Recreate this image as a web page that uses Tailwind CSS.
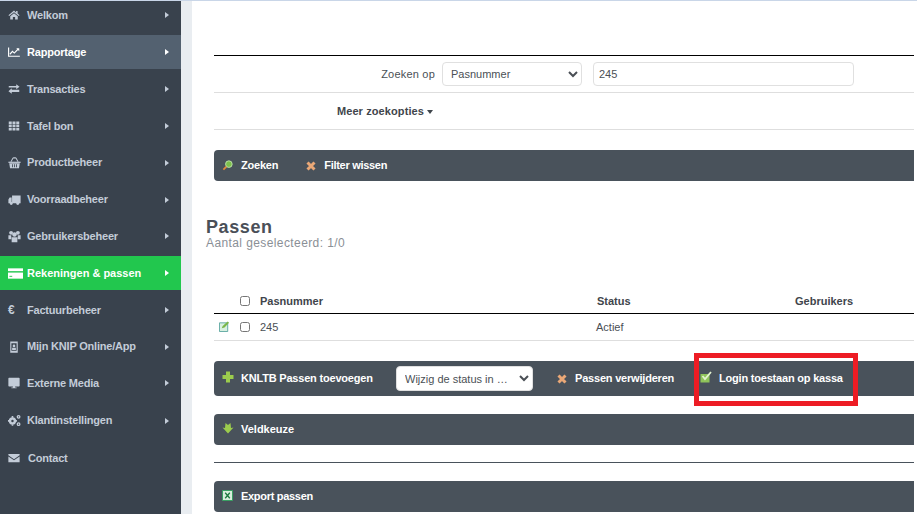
<!DOCTYPE html>
<html lang="en">
<head>
    <meta charset="UTF-8">
    <title>Passen</title>
    <script src="https://cdn.jsdelivr.net/npm/@tailwindcss/browser@4"></script>
</head>
<body class="relative h-[514px] overflow-hidden bg-white font-['Liberation_Sans',Arial,sans-serif] text-[11px] text-[#4a4f55]">
    <div class="h-px bg-[#c9d6e8]"></div>
    <div class="flex h-[513px]">
        <!-- Sidebar -->
        <aside class="w-[181px] shrink-0 overflow-hidden bg-[#39424d]">
            <nav class="-mt-[2.7px] font-bold tracking-[-0.2px] text-[#c3ccd8]">
                <a class="mb-[2.85px] flex h-[34px] items-center pl-2 pr-[12px]">
                    <svg class="mr-[7px] h-3 w-3 shrink-0" viewBox="0 0 16 16" fill="currentColor"><path d="M8 2 .6 8.2l1 1.2L8 4.2l6.4 5.2 1-1.2-2.6-2.1V2.5h-2v2.2z"/><path d="M3 9.6 8 5.5l5 4.1V14H9.5v-3.4h-3V14H3z"/></svg>
                    <span class="flex-1">Welkom</span>
                    <span class="h-0 w-0 border-y-[3px] border-l-[4px] border-y-transparent border-l-current"></span>
                </a>
                <a class="mb-[2.85px] flex h-[34px] items-center bg-[#536170] pl-2 pr-[12px] text-white">
                    <svg class="mr-[7px] h-3 w-3 shrink-0" viewBox="0 0 16 16" fill="none" stroke="currentColor" stroke-width="1.5"><path d="M.8 2v11.6h15"/><path d="M2.5 11 6 7.2 8.4 9.4 13.6 4"/><path d="M11 3h4v4z" fill="currentColor" stroke="none"/></svg>
                    <span class="flex-1">Rapportage</span>
                    <span class="h-0 w-0 border-y-[3px] border-l-[4px] border-y-transparent border-l-current"></span>
                </a>
                <a class="mb-[2.85px] flex h-[34px] items-center pl-2 pr-[12px]">
                    <svg class="mr-[7px] h-3 w-3 shrink-0" viewBox="0 0 16 16" fill="currentColor"><path d="M1 4h10V1.6L15.4 5 11 8.4V6H1zM15 9H5V6.9L.6 11 5 14.4V12h10z"/></svg>
                    <span class="flex-1">Transacties</span>
                    <span class="h-0 w-0 border-y-[3px] border-l-[4px] border-y-transparent border-l-current"></span>
                </a>
                <a class="mb-[2.85px] flex h-[34px] items-center pl-2 pr-[12px]">
                    <svg class="mr-[7px] h-3 w-3 shrink-0" viewBox="0 0 16 16" fill="currentColor"><path d="M1 2h4v3.5H1zM6 2h4v3.5H6zM11 2h4v3.5h-4zM1 6.3h4v3.4H1zM6 6.3h4v3.4H6zM11 6.3h4v3.4h-4zM1 10.500h4V14H1zM6 10.500h4V14H6zM11 10.500h4V14h-4z"/></svg>
                    <span class="flex-1">Tafel bon</span>
                    <span class="h-0 w-0 border-y-[3px] border-l-[4px] border-y-transparent border-l-current"></span>
                </a>
                <a class="mb-[2.85px] flex h-[34px] items-center pl-2 pr-[12px]">
                    <svg class="mr-[6px] h-[13px] w-[13px] shrink-0" viewBox="0 0 16 16" fill="currentColor"><path d="M.5 7h15v1.5H.5z"/><path fill-rule="evenodd" d="M1.5 9h13l-1 6h-11zM5 10.300v3.400h1v-3.400zM7.500 10.300v3.400h1v-3.400zM10 10.300v3.400h1v-3.400z"/><path d="M3 7 5.500 2.500Q6 1.500 7 1.500h2q1 0 1.500 1L13 7h-1.400L9.500 3h-3L4.400 7z"/></svg>
                    <span class="flex-1">Productbeheer</span>
                    <span class="h-0 w-0 border-y-[3px] border-l-[4px] border-y-transparent border-l-current"></span>
                </a>
                <a class="mb-[2.85px] flex h-[34px] items-center pl-2 pr-[12px]">
                    <svg class="mr-[6px] h-[13px] w-[13px] shrink-0" viewBox="0 0 16 16" fill="currentColor"><path d="M5 3h10.500v9.500H5zM4.500 5.500H2L.5 8v4.500h4z"/><circle cx="4" cy="13" r="1.800"/><circle cx="12" cy="13" r="1.800"/></svg>
                    <span class="flex-1">Voorraadbeheer</span>
                    <span class="h-0 w-0 border-y-[3px] border-l-[4px] border-y-transparent border-l-current"></span>
                </a>
                <a class="mb-[2.85px] flex h-[34px] items-center pl-2 pr-[12px]">
                    <svg class="mr-[6px] h-[13px] w-[13px] shrink-0" viewBox="0 0 16 16" fill="currentColor"><circle cx="3.800" cy="3.500" r="2.400"/><circle cx="12.200" cy="3.500" r="2.400"/><circle cx="8" cy="5.500" r="2.800"/><path d="M.5 6.500h3.500L4 11.500H.5zM12 6.500h3.500v5H12zM4.500 9h7v6h-7z"/></svg>
                    <span class="flex-1">Gebruikersbeheer</span>
                    <span class="h-0 w-0 border-y-[3px] border-l-[4px] border-y-transparent border-l-current"></span>
                </a>
                <a class="mb-[2.85px] flex h-[34px] items-center bg-[#22c74e] pl-2 pr-[12px] tracking-normal text-white">
                    <svg class="mr-[4px] h-[15px] w-[15px] shrink-0" viewBox="0 0 16 16"><path d="M0 2.500h16v3H0z" fill="#fff"/><path d="M0 7h16v6.500H0z" fill="#fff"/><path d="M1.500 10.500h3v1h-3z" fill="#22c74e"/></svg>
                    <span class="flex-1">Rekeningen &amp; passen</span>
                    <span class="h-0 w-0 border-y-[3px] border-l-[4px] border-y-transparent border-l-current"></span>
                </a>
                <a class="mb-[2.5px] flex h-[34px] items-center pl-2 pr-[12px]">
                    <span class="w-[19px] shrink-0 text-[12px]">€</span>
                    <span class="flex-1">Factuurbeheer</span>
                    <span class="h-0 w-0 border-y-[3px] border-l-[4px] border-y-transparent border-l-current"></span>
                </a>
                <a class="mb-[2.85px] flex h-[34px] items-center pl-2 pr-[12px]">
                    <svg class="mr-[7px] h-3 w-3 shrink-0" viewBox="0 0 16 16" fill="currentColor"><path fill-rule="evenodd" d="M3 .5h10v15H3zM4.500 3v10h7V3z"/><circle cx="8" cy="6.500" r="1.800"/><path d="M5.500 9h5v3h-5z"/></svg>
                    <span class="flex-1">Mijn KNIP Online/App</span>
                    <span class="h-0 w-0 border-y-[3px] border-l-[4px] border-y-transparent border-l-current"></span>
                </a>
                <a class="mb-[3.2px] flex h-[34px] items-center pl-2 pr-[12px]">
                    <svg class="mr-[7px] h-3 w-3 shrink-0" viewBox="0 0 16 16" fill="currentColor"><path fill-rule="evenodd" d="M1.500 1h13a1 1 0 0 1 1 1v9.500a1 1 0 0 1-1 1h-5V14h2v1h-7v-1h2v-1.500h-5a1 1 0 0 1-1-1V2a1 1 0 0 1 1-1z"/></svg>
                    <span class="flex-1">Externe Media</span>
                    <span class="h-0 w-0 border-y-[3px] border-l-[4px] border-y-transparent border-l-current"></span>
                </a>
                <a class="mb-[2.85px] flex h-[34px] items-center pl-2 pr-[12px]">
                    <svg class="mr-[6px] h-[13px] w-[13px] shrink-0" viewBox="0 0 16 16" fill="currentColor"><circle cx="5.500" cy="8.500" r="3" fill="none" stroke="currentColor" stroke-width="3"/><path d="M4.500 2.500h2v2h-2zM4.500 12.500h2v2h-2zM0 7.500h2v2H0zM9 7.500h2v2H9z"/><circle cx="13" cy="3.500" r="1.600" fill="none" stroke="currentColor" stroke-width="1.600"/><circle cx="13" cy="12.500" r="1.600" fill="none" stroke="currentColor" stroke-width="1.600"/></svg>
                    <span class="flex-1">Klantinstellingen</span>
                    <span class="h-0 w-0 border-y-[3px] border-l-[4px] border-y-transparent border-l-current"></span>
                </a>
                <a class="flex h-[34px] items-center pl-2 pr-[12px] pt-[1px]">
                    <svg class="mr-2 h-3 w-3 shrink-0" viewBox="0 0 16 16" fill="currentColor"><path d="M.5 2.500h15v1.800L8 9.500.5 4.300z"/><path d="M.5 6 8 11l7.500-5v7.500H.5z"/></svg>
                    <span class="flex-1">Contact</span>
                </a>
            </nav>
        </aside>
        <div class="w-[11px] shrink-0 bg-[#e9edf1]"></div>

        <!-- Main -->
        <main class="flex-1 overflow-hidden pl-[22px] pr-[3px]">
            <div class="mt-[54px] border-t border-black"></div>
            <div class="flex h-[37px] items-center border-b border-[#dedede]">
                <label class="w-[221px] text-right tracking-[0.2px]">Zoeken op</label>
                <select class="ml-[7px] h-[24px] w-[140px] rounded-[4px] border border-[#e0e0e0] bg-white pl-[4px] text-[11px]">
                    <option>Pasnummer</option>
                </select>
                <input value="245" class="ml-[11px] h-[24px] w-[261px] rounded-[4px] border border-[#e0e0e0] pl-[5px] text-[11px]">
            </div>
            <div class="flex h-[37px] items-center border-b border-[#dedede]">
                <div class="flex w-[219px] items-center justify-end font-bold tracking-[0.1px] text-[#3f454b]">
                    Meer zoekopties
                    <span class="ml-[3px] mt-[1px] h-0 w-0 border-x-[3.5px] border-t-[4px] border-x-transparent border-t-current"></span>
                </div>
            </div>

            <div class="mt-[20px] flex h-[31px] items-center rounded-l-[4px] bg-[#49525b] pl-[8px] font-bold tracking-[-0.2px] text-white">
                <svg class="mr-[8px] h-[11px] w-[11px]" viewBox="0 0 12 12"><circle cx="7.500" cy="4.500" r="3.600" fill="#7cc04b" stroke="#bfe3ae"/><path d="M4.800 7.200 1.500 10.500" stroke="#e08a3c" stroke-width="2"/></svg>
                <span>Zoeken</span>
                <svg class="ml-[28px] mr-[8px] h-[10px] w-[10px]" viewBox="0 0 10 10"><path d="M1.500 1.500l7 7M8.500 1.500l-7 7" stroke="#eaa877" stroke-width="3"/></svg>
                <span class="tracking-[-0.3px]">Filter wissen</span>
            </div>

            <h2 class="-ml-[8px] mt-[37px] h-[18px] text-[18px] font-bold leading-[18px] tracking-[0.6px] text-[#4a4f58]">Passen</h2>
            <p class="-ml-[8px] text-[12px] leading-[14px] tracking-[0.4px] text-[#8a8f96]">Aantal geselecteerd: 1/0</p>

            <div class="mt-[39px] grid h-[25px] grid-cols-[26px_20px_337px_198px_1fr] items-center border-b border-black font-bold text-[#3f454b]">
                <span></span>
                <input type="checkbox" class="h-[10px] w-[10px]">
                <span>Pasnummer</span>
                <span>Status</span>
                <span>Gebruikers</span>
            </div>
            <div class="grid h-[27px] grid-cols-[26px_20px_337px_198px_1fr] items-center border-b border-[#dedede]">
                <svg class="mb-[2px] ml-[5px] h-[11px] w-[11px]" viewBox="0 0 12 12"><path d="M.5 2h9v9.500h-9z" fill="#d8f0e0" stroke="#5aa5a0"/><path d="M3 8l1-2.500L9.500.5 11 2 6 7z" fill="#7ab648"/></svg>
                <input type="checkbox" class="h-[10px] w-[10px]">
                <span>245</span>
                <span class="-ml-px">Actief</span>
                <span></span>
            </div>

            <div class="mt-[20px] flex h-[35px] items-center rounded-l-[4px] bg-[#49525b] pl-[8px] font-bold tracking-[-0.2px] text-white">
                <svg class="mb-[3px] mr-[7px] h-[12px] w-[12px]" viewBox="0 0 12 12"><path d="M4 .5h4V4h3.500v4H8v3.500H4V8H.5V4H4z" fill="#9ccc4d"/></svg>
                <span class="w-[131px] whitespace-nowrap">KNLTB Passen toevoegen</span>
                <select class="ml-[24px] h-[25px] w-[137px] rounded-[4px] border border-[#e0e0e0] bg-white pl-[4px] text-[11px] font-normal tracking-normal text-[#4a4f55]">
                    <option>Wijzig de status in …</option>
                </select>
                <svg class="ml-[24px] mr-[8px] h-[10px] w-[10px]" viewBox="0 0 10 10"><path d="M1.500 1.500l7 7M8.500 1.500l-7 7" stroke="#eaa877" stroke-width="3"/></svg>
                <span class="w-[99px] whitespace-nowrap">Passen verwijderen</span>
                <svg class="mb-[3px] ml-[26px] mr-[7px] h-[12px] w-[12px]" viewBox="0 0 12 12"><path d="M.5 3h9v8.500h-9z" fill="#8fc45a"/><path d="M2.500 5 5 8l6-7" fill="none" stroke="#e4f3cf" stroke-width="1.800"/></svg>
                <span class="whitespace-nowrap">Login toestaan op kassa</span>
            </div>

            <div class="mt-[18px] flex h-[31px] items-center rounded-l-[4px] bg-[#49525b] pl-[8px] font-bold text-white">
                <svg class="mb-[3px] mr-[7px] h-[12px] w-[12px]" viewBox="0 0 12 12"><path d="M3.500 1 6 3l2.500-2 .5 5 2.500-.5L6 11.500.5 5.500 3 6z" fill="#9ccc4d"/></svg>
                <span>Veldkeuze</span>
            </div>

            <div class="mt-[17px] border-t border-[#49525b]"></div>

            <div class="mt-[18px] flex h-[31px] items-center rounded-l-[4px] bg-[#49525b] pl-[8px] font-bold tracking-[-0.3px] text-white">
                <svg class="mb-[2px] mr-[8px] h-[11px] w-[11px]" viewBox="0 0 12 12"><path d="M.5.500h11v11H.5z" fill="#d8efdc" stroke="#2e9e5b"/><path d="M3.500 3l5 6M8.500 3l-5 6" stroke="#1d7a3f" stroke-width="1.400"/></svg>
                <span>Export passen</span>
            </div>
        </main>
    </div>

    <!-- Annotation box drawn over the screenshot -->
    <div class="absolute left-[694px] top-[353px] h-[53px] w-[164px] border-[5px] border-[#ed1c24]"></div>
</body>
</html>
